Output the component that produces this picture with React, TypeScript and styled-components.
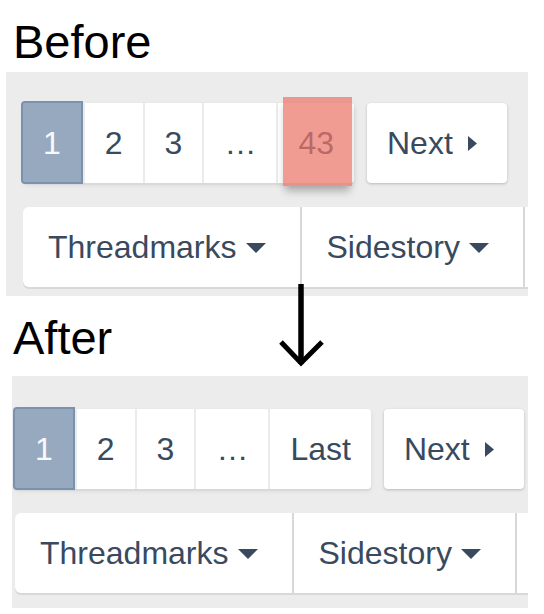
import React from "react";
import styled, { createGlobalStyle, css } from "styled-components";

const GlobalStyle = createGlobalStyle`
  html, body { margin: 0; padding: 0; background: #ffffff; }
  body { font-family: "Liberation Sans", Arial, sans-serif; }
`;

const Page = styled.div`
  position: relative;
  width: 544px;
  height: 614px;
  overflow: hidden;
  display: flex;
  flex-direction: column;
  font-family: "Liberation Sans", Arial, sans-serif;
`;

const Heading = styled.h1<{ $top: number; $bottom: number }>`
  margin: ${(p) => p.$top}px 0 ${(p) => p.$bottom}px 13px;
  font-size: 47px;
  line-height: 46px;
  font-weight: 400;
  color: #000;
`;

const Panel = styled.section<{ $left: number; $padTop: number; $padLeft: number; $padBottom: number }>`
  margin: 0 16px 0 ${(p) => p.$left}px;
  background: #ececec;
  padding: ${(p) => p.$padTop}px 0 ${(p) => p.$padBottom}px ${(p) => p.$padLeft}px;
  display: flex;
  flex-direction: column;
  gap: 24px;
  overflow: hidden;
`;

const NavRow = styled.div`
  display: flex;
  align-items: stretch;
  gap: 13px;
  height: 80px;
`;

const PageGroup = styled.div`
  position: relative;
  display: flex;
  align-items: stretch;
  background: #fff;
  border-radius: 4px;
  box-shadow: 0 2px 0 #d9d9d9, 0 2px 5px rgba(0, 0, 0, 0.08);
`;

const PageButton = styled.div<{ $active?: boolean }>`
  position: relative;
  display: flex;
  align-items: center;
  justify-content: center;
  padding: 0 20px;
  font-size: 32px;
  line-height: 1;
  color: #394a5e;
  background: #fff;
  border-left: 2px solid #ebebeb;
  &:last-child { border-radius: 0 4px 4px 0; }
  ${(p) =>
    p.$active &&
    css`
      margin: -2px 0 -1px -2px;
      border: 2px solid #7b92ae;
      border-radius: 4px 0 0 4px;
      background: #97a9be;
      color: #f7f9fb;
    `}
`;

const Highlight = styled.span`
  position: absolute;
  top: -6px;
  bottom: -3px;
  left: 5px;
  right: 2px;
  background: rgba(236, 118, 105, 0.72);
  box-shadow: 0 7px 8px -2px rgba(0, 0, 0, 0.28);
`;

const NextButton = styled.div`
  display: flex;
  align-items: center;
  padding: 0 30px 0 20px;
  font-size: 32px;
  line-height: 1;
  color: #394a5e;
  background: #fff;
  border-radius: 4px;
  box-shadow: 0 1px 3px rgba(0, 0, 0, 0.22);
`;

const CaretRight = styled.svg`
  margin-left: 15px;
  width: 9px;
  height: 15px;
  fill: #394a5e;
`;

const TabBar = styled.div`
  display: flex;
  align-items: stretch;
  height: 80px;
  margin-right: -40px;
  background: #fff;
  border-radius: 6px 0 0 6px;
  box-shadow: 0 2px 0 #d8d8d8;
`;

const Tab = styled.div<{ $filler?: boolean }>`
  display: flex;
  align-items: center;
  padding: ${(p) => (p.$filler ? "0 40px 0 0" : "0 34px 0 25px")};
  font-size: 32px;
  line-height: 1;
  color: #394a5e;
  & + & { border-left: 2px solid #d8d8d8; }
`;

const CaretDown = styled.svg`
  margin-left: 9px;
  margin-top: 2px;
  width: 20px;
  height: 10px;
  fill: #394a5e;
`;

const Arrow = styled.svg`
  position: absolute;
  left: 278px;
  top: 282px;
  width: 48px;
  height: 88px;
`;

const pages = ["1", "2", "3", "…"];

function Pagination({ last, highlight }: { last: string; highlight?: boolean }) {
  return (
    <NavRow>
      <PageGroup>
        {pages.map((p, i) => (
          <PageButton key={p} $active={i === 0}>
            {p}
          </PageButton>
        ))}
        <PageButton>
          {last}
          {highlight && <Highlight />}
        </PageButton>
      </PageGroup>
      <NextButton>
        Next
        <CaretRight viewBox="0 0 9 15">
          <polygon points="0,0 9,7.5 0,15" />
        </CaretRight>
      </NextButton>
    </NavRow>
  );
}

function Tabs() {
  return (
    <TabBar>
      <Tab>
        Threadmarks
        <CaretDown viewBox="0 0 20 10">
          <polygon points="0,0 20,0 10,10" />
        </CaretDown>
      </Tab>
      <Tab>
        Sidestory
        <CaretDown viewBox="0 0 20 10">
          <polygon points="0,0 20,0 10,10" />
        </CaretDown>
      </Tab>
      <Tab $filler />
    </TabBar>
  );
}

export default function App() {
  return (
    <>
      <GlobalStyle />
      <Page>
        <Heading $top={19} $bottom={7}>Before</Heading>
        <Panel $left={6} $padTop={31} $padLeft={17} $padBottom={9}>
          <Pagination last="43" highlight />
          <Tabs />
        </Panel>
        <Heading $top={19} $bottom={15}>After</Heading>
        <Panel $left={12} $padTop={33} $padLeft={3} $padBottom={15}>
          <Pagination last="Last" />
          <Tabs />
        </Panel>
        <Arrow viewBox="0 0 48 88">
          <line x1="23" y1="2" x2="23" y2="82" stroke="#000" strokeWidth="5.5" />
          <polyline
            points="3,60 23,81 44,60"
            fill="none"
            stroke="#000"
            strokeWidth="5"
            strokeLinejoin="miter"
          />
        </Arrow>
      </Page>
    </>
  );
}
